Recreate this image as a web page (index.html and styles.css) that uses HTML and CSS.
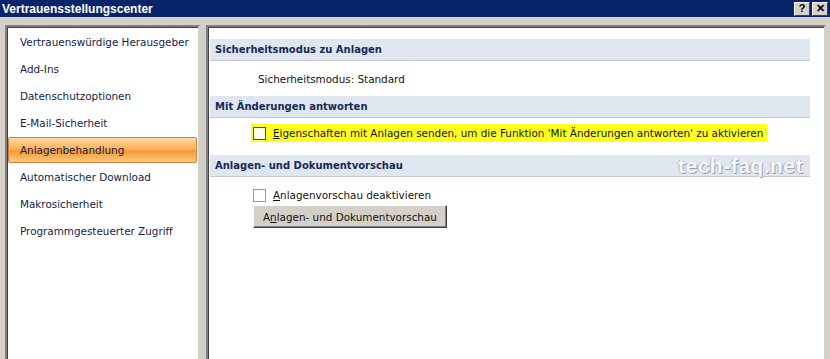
FILE: index.html
```html
<!DOCTYPE html>
<html lang="de">
<head>
    <meta charset="UTF-8">
    <title>Vertrauensstellungscenter</title>
    <link rel="stylesheet" href="styles.css">
</head>
<body>
    <div class="window">
        <div class="titlebar">
            <span class="title">Vertrauensstellungscenter</span>
            <div class="tb-buttons">
                <button class="tb-btn">?</button>
                <button class="tb-btn">✕</button>
            </div>
        </div>

        <div class="main">
            <ul class="nav">
                <li>Vertrauenswürdige Herausgeber</li>
                <li>Add-Ins</li>
                <li>Datenschutzoptionen</li>
                <li>E-Mail-Sicherheit</li>
                <li class="active">Anlagenbehandlung</li>
                <li>Automatischer Download</li>
                <li>Makrosicherheit</li>
                <li>Programmgesteuerter Zugriff</li>
            </ul>

            <div class="content">
                <div class="section-head">Sicherheitsmodus zu Anlagen</div>
                <div class="section-body first">
                    <p class="plain">Sicherheitsmodus: Standard</p>
                </div>

                <div class="section-head">Mit Änderungen antworten</div>
                <div class="section-body second">
                    <label class="check highlight">
                        <span class="box dark"></span>
                        <span><u>E</u>igenschaften mit Anlagen senden, um die Funktion 'Mit Änderungen antworten' zu aktivieren</span>
                    </label>
                </div>

                <div class="section-head">
                    <span>Anlagen- und Dokumentvorschau</span>
                    <span class="watermark">tech-faq.net</span>
                </div>
                <div class="section-body third">
                    <label class="check">
                        <span class="box"></span>
                        <span><u>A</u>nlagenvorschau deaktivieren</span>
                    </label>
                    <button class="btn">A<u>n</u>lagen- und Dokumentvorschau</button>
                </div>
            </div>
        </div>
    </div>
</body>
</html>
```

FILE: styles.css
```css
html, body {
    margin: 0;
    padding: 0;
    overflow: hidden;
}
body {
    font-family: "DejaVu Sans", Tahoma, sans-serif;
    font-size: 10.4px;
    color: #111;
    background-color: #d4d0c8;
}
.window {
    width: 830px;
    height: 359px;
    display: flex;
    flex-direction: column;
    overflow: hidden;
    background-color: #d4d0c8;
}
.titlebar {
    flex: none;
    height: 17px;
    background-color: #0a246a;
    display: flex;
    align-items: center;
    justify-content: space-between;
    padding: 0 2px 0 2px;
}
.title {
    color: #fff;
    font-family: "Liberation Sans", Arial, sans-serif;
    font-weight: bold;
    font-size: 12px;
}
.tb-buttons {
    display: flex;
    gap: 2px;
}
.tb-btn {
    width: 16px;
    height: 14px;
    padding: 0;
    background-color: #d4d0c8;
    border: 1px solid;
    border-color: #fff #404040 #404040 #fff;
    font-family: "Liberation Sans", Arial, sans-serif;
    font-weight: bold;
    font-size: 11px;
    line-height: 11px;
    color: #000;
}
.main {
    flex: none;
    display: flex;
    gap: 6px;
    padding: 8px 4px 0 5px;
}
.nav,
.content {
    height: 340px;
    background-color: #fff;
    border: 2px solid;
    border-color: #808080 #d4d0c8 #d4d0c8 #808080;
    box-shadow: inset 1px 1px 0 #404040;
}
.nav {
    list-style-type: none;
    margin: 0;
    padding: 1px 0 0 0;
    width: 191px;
    flex: none;
}
.nav li {
    height: 24px;
    line-height: 24px;
    margin: 1px;
    padding-left: 11px;
    color: #141c4a;
    border: 1px solid transparent;
    border-radius: 2px;
}
.nav li.active {
    background: linear-gradient(#ffdba6, #fdb15a 45%, #f79a33 55%, #fdc882);
    border-color: #c9843c;
}
.content {
    flex: 1;
    padding: 12px 14px 0 2px;
}
.section-head {
    height: 21px;
    display: flex;
    align-items: center;
    justify-content: space-between;
    padding: 0 5px;
    background-color: #dfe6ef;
    border-bottom: 1px solid #c1c8d3;
    font-size: 10px;
    font-weight: bold;
    color: #15295a;
}
.watermark {
    font-family: "Liberation Sans", Arial, sans-serif;
    font-size: 21px;
    font-weight: bold;
    color: #f5f7fa;
    letter-spacing: 0.5px;
    text-shadow: 1px 1px 0 #9aa2ad, -1px 0 0 #b4bac3;
    margin-right: 2px;
}
.section-body {
    padding-left: 41px;
}
.section-body.first {
    height: 35px;
    display: flex;
    align-items: center;
}
.plain {
    margin: 0 0 0 7px;
}
.section-body.second {
    padding-top: 6px;
    height: 31px;
}
.section-body.third {
    padding-top: 9px;
    display: flex;
    flex-direction: column;
    align-items: flex-start;
    gap: 1px;
}
.check {
    display: flex;
    align-items: center;
    gap: 7px;
    height: 18px;
    padding: 0 4px 0 2px;
}
.check.highlight {
    display: inline-flex;
    background-color: #ffff1e;
}
.box {
    width: 11px;
    height: 11px;
    background-color: #fff;
    border: 1px solid #9a9a9a;
}
.box.dark {
    background-color: #fffff0;
    border-color: #4a4a3a;
}
.btn {
    height: 23px;
    margin-left: 2px;
    padding: 0 9px;
    font-family: "DejaVu Sans", Tahoma, sans-serif;
    font-size: 10.4px;
    color: #111;
    background-color: #d4d0c8;
    border: 1px solid;
    border-color: #fff #404040 #404040 #fff;
    box-shadow: inset -1px -1px 0 #808080;
}
```
